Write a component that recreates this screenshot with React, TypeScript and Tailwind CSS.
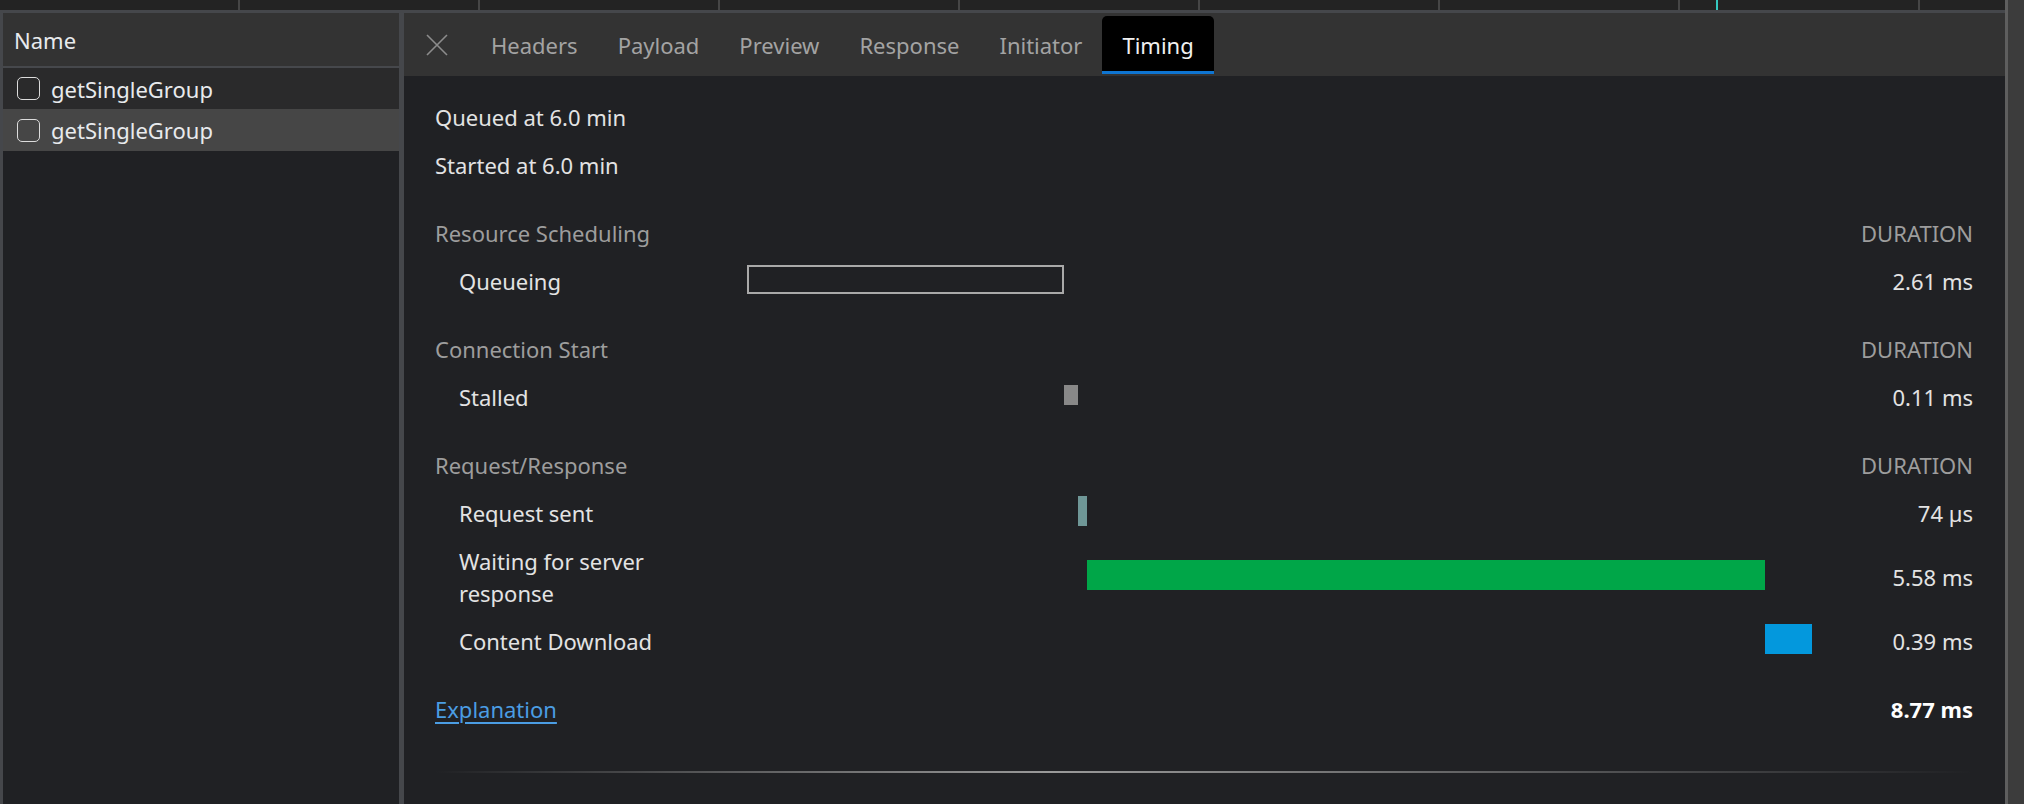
const TOTAL = 8.77;

type Phase = {
    label: string[];
    start: number;
    dur: number;
    value: string;
    kind: 'queue' | 'stalled' | 'sent' | 'wait' | 'download';
};

const sections: { title: string; rows: Phase[] }[] = [
    {
        title: 'Resource Scheduling',
        rows: [{ label: ['Queueing'], start: 0, dur: 2.61, value: '2.61 ms', kind: 'queue' }],
    },
    {
        title: 'Connection Start',
        rows: [{ label: ['Stalled'], start: 2.61, dur: 0.11, value: '0.11 ms', kind: 'stalled' }],
    },
    {
        title: 'Request/Response',
        rows: [
            { label: ['Request sent'], start: 2.72, dur: 0.074, value: '74 µs', kind: 'sent' },
            { label: ['Waiting for server', 'response'], start: 2.794, dur: 5.58, value: '5.58 ms', kind: 'wait' },
            { label: ['Content Download'], start: 8.374, dur: 0.39, value: '0.39 ms', kind: 'download' },
        ],
    },
];

const barClass: Record<Phase['kind'], string> = {
    queue: 'h-[29px] border-2 border-[#a9a9a9] box-border',
    stalled: 'h-[20px] bg-[#888888]',
    sent: 'h-[30px] bg-[#6f9797]',
    wait: 'h-[30px] bg-[#00a648]',
    download: 'h-[30px] bg-[#0398dd]',
};

const tabs = ['Headers', 'Payload', 'Preview', 'Response', 'Initiator', 'Timing'];

const CloseIcon = () => (
    <svg width="24" height="24" viewBox="0 0 24 24" className="shrink-0">
        <path d="M2 2 L22 22 M22 2 L2 22" stroke="#8c8c8c" strokeWidth="1.6" fill="none" />
    </svg>
);

const Checkbox = () => (
    <span className="block w-[23px] h-[23px] rounded-[5px] border-[1.5px] border-[#dcdcdc] shrink-0" />
);

const TopStrip = () => (
    <div className="relative h-[10px] flex bg-[#232323]">
        {[...Array(8)].map((_, i) => (
            <div key={i} className="w-[240px] h-full border-r-2 border-[#464646] shrink-0" />
        ))}
        <div className="flex-1" />
        <div className="absolute left-[1716px] top-0 h-full w-[2px] bg-[#35c9c0]" />
    </div>
);

const RequestList = () => (
    <div className="w-[396px] flex flex-col bg-[#202124]">
        <div className="h-[53px] bg-[#333333] flex items-center pl-[11px] text-[#e8eaed]">Name</div>
        <div className="h-[2px] bg-[#46484c]" />
        <div className="h-[41px] bg-[#2a2a2b] flex items-center gap-[11px] pl-[14px] text-[#e8eaed]">
            <Checkbox />
            <span>getSingleGroup</span>
        </div>
        <div className="h-[42px] bg-[#464646] flex items-center gap-[11px] pl-[14px] text-[#e8eaed]">
            <Checkbox />
            <span>getSingleGroup</span>
        </div>
    </div>
);

const TabBar = () => (
    <div className="h-[63px] bg-[#333333] flex items-start pt-[3px]">
        <div className="h-[58px] flex items-center ml-[21px] mr-[22px]">
            <CloseIcon />
        </div>
        {tabs.map((tab) => {
            const active = tab === 'Timing';
            return (
                <div
                    key={tab}
                    className={
                        active
                            ? 'h-[58px] px-[20px] flex items-center bg-black text-[#f1f1f1] rounded-t-[5px] border-b-[3px] border-[#0f75d1] pt-[2px]'
                            : 'h-[58px] px-[20px] flex items-center text-[#a3a3a3] pb-[1px]'
                    }
                >
                    {tab}
                </div>
            );
        })}
    </div>
);

const TimingPanel = () => (
    <div className="flex-1 bg-[#202124] pt-[17px] pl-[31px] pr-[32px] text-[#e3e3e3]">
        <div className="h-[48px] flex items-center">Queued at 6.0 min</div>
        <div className="h-[48px] flex items-center">Started at 6.0 min</div>

        {sections.map((section) => (
            <div key={section.title} className="mt-[20px]">
                <div className="h-[48px] flex items-center justify-between text-[#9d9d9d]">
                    <span>{section.title}</span>
                    <span>DURATION</span>
                </div>
                {section.rows.map((row) => (
                    <div
                        key={row.label.join(' ')}
                        className={`grid grid-cols-[312px_1066px_1fr] items-center ${row.label.length > 1 ? 'h-[80px]' : 'h-[48px]'}`}
                    >
                        <div className="pl-[24px]">
                            {row.label.map((line) => (
                                <div key={line}>{line}</div>
                            ))}
                        </div>
                        <div className="flex items-center mb-[4px]">
                            <div
                                className={barClass[row.kind]}
                                style={{
                                    marginLeft: `${(row.start / TOTAL) * 100}%`,
                                    width: `${(row.dur / TOTAL) * 100}%`,
                                }}
                            />
                        </div>
                        <div className="text-right">{row.value}</div>
                    </div>
                ))}
            </div>
        ))}

        <div className="mt-[20px] h-[48px] flex items-center justify-between">
            <a className="text-[#4b9de3] underline underline-offset-[4px] decoration-[1.5px]">Explanation</a>
            <span className="font-bold text-white">8.77 ms</span>
        </div>

        <div className="mt-[38px] h-[2px] bg-linear-to-r from-transparent via-[#9a9a9a] via-40% to-transparent" />
    </div>
);

export default function App() {
    return (
        <div className="w-[2024px] h-[804px] overflow-hidden bg-[#45474b] font-['Noto_Sans',sans-serif] text-[22px] leading-[32px] flex">
            <div className="w-[2005px] flex flex-col">
                <TopStrip />
                <div className="flex-1 flex pt-[3px] pl-[3px] gap-[5px] min-h-0">
                    <RequestList />
                    <div className="flex-1 flex flex-col">
                        <TabBar />
                        <TimingPanel />
                    </div>
                </div>
            </div>
            <div className="flex-1 bg-[#3c3c3c] border-l-[3px] border-[#5e5e5e]" />
        </div>
    );
}
